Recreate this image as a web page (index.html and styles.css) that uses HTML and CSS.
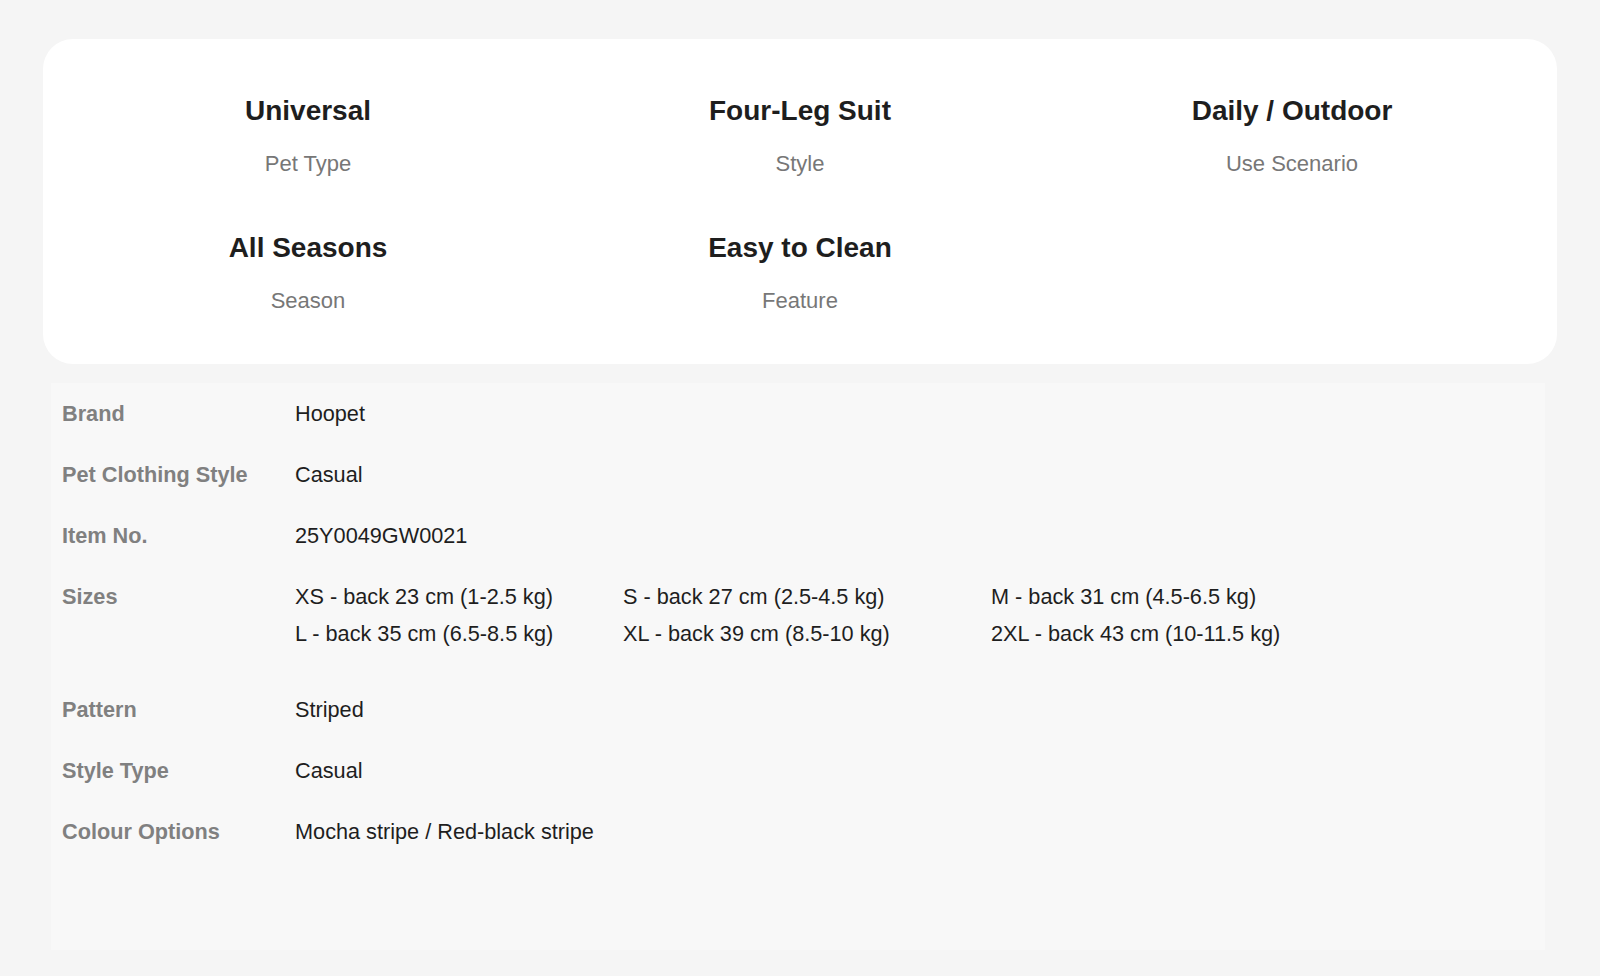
FILE: index.html
```html
<!DOCTYPE html>
<html lang="en">
<head>
    <meta charset="UTF-8">
    <meta name="viewport" content="width=device-width, initial-scale=1.0">
    <title>Product Details</title>
    <link rel="stylesheet" href="styles.css">
</head>
<body>
    <div class="page">
        <div class="highlights">
            <div class="highlight">
                <div class="highlight-value">Universal</div>
                <div class="highlight-label">Pet Type</div>
            </div>
            <div class="highlight">
                <div class="highlight-value">Four-Leg Suit</div>
                <div class="highlight-label">Style</div>
            </div>
            <div class="highlight">
                <div class="highlight-value">Daily / Outdoor</div>
                <div class="highlight-label">Use Scenario</div>
            </div>
            <div class="highlight">
                <div class="highlight-value">All Seasons</div>
                <div class="highlight-label">Season</div>
            </div>
            <div class="highlight">
                <div class="highlight-value">Easy to Clean</div>
                <div class="highlight-label">Feature</div>
            </div>
        </div>

        <div class="specs">
            <div class="spec-row">
                <div class="spec-label">Brand</div>
                <div class="spec-value">Hoopet</div>
            </div>
            <div class="spec-row">
                <div class="spec-label">Pet Clothing Style</div>
                <div class="spec-value">Casual</div>
            </div>
            <div class="spec-row">
                <div class="spec-label">Item No.</div>
                <div class="spec-value">25Y0049GW0021</div>
            </div>
            <div class="spec-row spec-row-sizes">
                <div class="spec-label">Sizes</div>
                <div class="spec-value sizes">
                    <span>XS - back 23 cm (1-2.5 kg)</span>
                    <span>S - back 27 cm (2.5-4.5 kg)</span>
                    <span>M - back 31 cm (4.5-6.5 kg)</span>
                    <span>L - back 35 cm (6.5-8.5 kg)</span>
                    <span>XL - back 39 cm (8.5-10 kg)</span>
                    <span>2XL - back 43 cm (10-11.5 kg)</span>
                </div>
            </div>
            <div class="spec-row">
                <div class="spec-label">Pattern</div>
                <div class="spec-value">Striped</div>
            </div>
            <div class="spec-row">
                <div class="spec-label">Style Type</div>
                <div class="spec-value">Casual</div>
            </div>
            <div class="spec-row">
                <div class="spec-label">Colour Options</div>
                <div class="spec-value">Mocha stripe / Red-black stripe</div>
            </div>
        </div>
    </div>
</body>
</html>
```

FILE: styles.css
```css
body {
    font-family: "Liberation Sans", Arial, sans-serif;
    background: #f5f5f5;
    color: #222;
    margin: 0;
}
.page {
    padding: 39px 43px 0;
}
.highlights {
    background: #fff;
    border-radius: 30px;
    display: grid;
    grid-template-columns: 1fr 1fr 1fr;
    row-gap: 51px;
    padding: 54px 19px 48px;
}
.highlight {
    text-align: center;
}
.highlight-value {
    font-size: 28px;
    font-weight: bold;
    line-height: 36px;
    color: #1e1e1e;
}
.highlight-label {
    font-size: 22px;
    line-height: 30px;
    color: #777;
    margin-top: 20px;
}
.specs {
    background: #f8f8f8;
    margin: 19px 12px 0 8px;
    padding: 0 11px 88px;
}
.spec-row {
    display: flex;
    padding: 15px 0;
    font-size: 21.7px;
    line-height: 31px;
}
.spec-row-sizes {
    padding-bottom: 30px;
}
.spec-label {
    width: 233px;
    flex-shrink: 0;
    font-weight: bold;
    color: #808080;
}
.spec-value {
    color: #1e1e1e;
}
.sizes {
    display: grid;
    grid-template-columns: 328px 368px auto;
    row-gap: 6px;
}
```
